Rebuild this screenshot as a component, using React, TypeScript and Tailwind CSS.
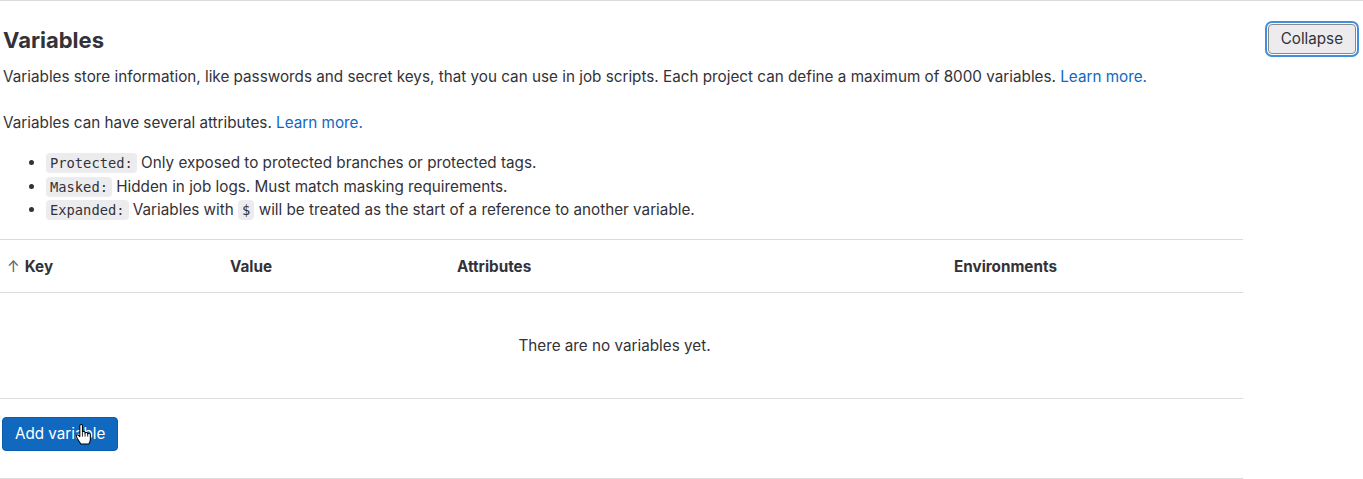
import React from "react";

function Code({ children }: { children: React.ReactNode }) {
  return (
    <code className="rounded-[4px] bg-[#ececef] px-[4px] py-[2px] font-['DejaVu_Sans_Mono',monospace] text-[13.75px] leading-none text-[#333238]">
      {children}
    </code>
  );
}

function HandCursor() {
  return (
    <svg
      className="pointer-events-none absolute left-[73px] top-[7px]"
      width="17"
      height="21"
      viewBox="0 0 16 20"
    >
      <path
        d="M4.5 1.5 Q4.5 0.5 5.75 0.5 Q7 0.5 7 1.5 V7.5 Q7 7 8.25 7 Q9.5 7 9.5 8 V8.5 Q9.5 8 10.75 8 Q12 8 12 9 V9.5 Q12 9 13.25 9 Q14.5 9 14.5 10 V15 Q14.5 17 13 19 H5.5 Q4 17 2 13.5 L1 11.5 Q0.8 10.3 2 10.3 Q3 10.3 4.5 12 Z"
        fill="#fff"
        stroke="#000"
        strokeWidth="1"
        strokeLinejoin="round"
      />
      <path d="M7 8 V12 M9.5 8.5 V12 M12 9.5 V12" stroke="#000" strokeWidth="0.8" fill="none" />
    </svg>
  );
}

export default function App() {
  return (
    <div className="w-[1363px] bg-white font-['Inter',sans-serif] text-[15.25px] text-[#333238]">
      <section className="border-t border-[#dcdcde]">
        <div className="flex items-start justify-between">
          <div className="pl-[3px]">
            <h2 className="mt-[26px] text-[22px] font-bold leading-[26px] text-[#333238]">Variables</h2>
            <p className="mt-[14px] leading-[20px]">
              Variables store information, like passwords and secret keys, that you can use in job scripts. Each project can define a maximum of 8000 variables.{" "}
              <a className="text-[#1068bf]">Learn more.</a>
            </p>
          </div>
          <button className="mr-[7px] mt-[23px] h-[30px] rounded-[4px] border border-[#89888d] bg-[#ececef] px-[12px] text-[15.2px] leading-[20px] text-[#333238] shadow-[0_0_0_1px_#fff,0_0_0_3px_#428fdc]">
            Collapse
          </button>
        </div>
        <div className="w-[1243px]">
          <p className="mt-[26px] pl-[3px] leading-[20px]">
            Variables can have several attributes. <a className="text-[#1068bf]">Learn more.</a>
          </p>
          <ul className="mt-[18px] list-disc pl-[46px] marker:text-[#333238]">
            <li className="h-[23.5px] leading-[23.5px]">
              <Code>Protected:</Code> Only exposed to protected branches or protected tags.
            </li>
            <li className="h-[23.5px] leading-[23.5px]">
              <Code>Masked:</Code> Hidden in job logs. Must match masking requirements.
            </li>
            <li className="h-[23.5px] leading-[23.5px]">
              <Code>Expanded:</Code> Variables with <Code>$</Code> will be treated as the start of a reference to another variable.
            </li>
          </ul>
          <div className="mt-[17px] border-t border-[#dcdcde]">
            <div className="flex h-[53px] items-center border-b border-[#dcdcde] pt-[3px] font-bold">
              <div className="flex w-[229px] items-center pl-[7px]">
                <span className="mr-[5px] font-normal text-[#626168]">↑</span>
                <span>Key</span>
              </div>
              <div className="w-[227px] pl-[1px]">Value</div>
              <div className="w-[497px] pl-[1px]">Attributes</div>
              <div className="pl-[1px]">Environments</div>
            </div>
            <div className="flex h-[106px] items-center justify-center border-b border-[#dcdcde] pr-[14px] pt-[2px]">
              There are no variables yet.
            </div>
            <div className="border-b border-[#dcdcde] pb-[27px] pl-[2px] pt-[18px]">
              <div className="relative inline-block">
                <button className="h-[34px] rounded-[4px] border border-[#0b5cad] bg-[#1068bf] px-[12px] text-[15.2px] leading-[20px] text-white">
                  Add variable
                </button>
                <HandCursor />
              </div>
            </div>
          </div>
        </div>
      </section>
    </div>
  );
}
